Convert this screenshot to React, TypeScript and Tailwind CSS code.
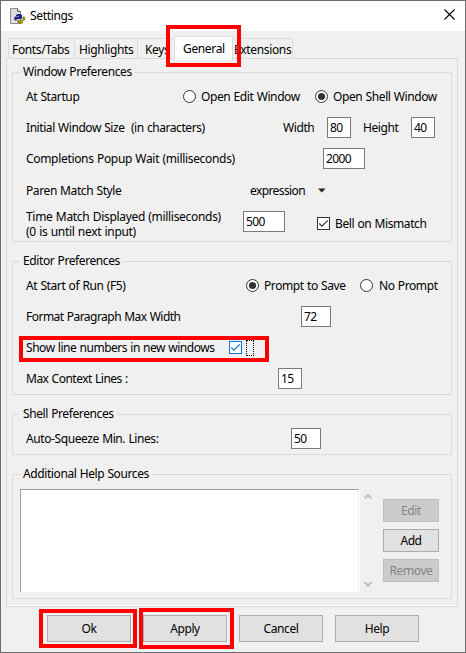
import React from "react";

function Label({ className = "", children }: { className?: string; children: React.ReactNode }) {
  return <span className={`block shrink-0 whitespace-pre leading-[15px] ${className}`}>{children}</span>;
}

function Group({ title, className = "", children }: { title: string; className?: string; children: React.ReactNode }) {
  return (
    <section className={`border border-[#dcdcdc] ${className}`}>
      <h2 className="-mt-[9px] ml-[7px] h-4 w-fit bg-[#f0f0f0] px-[3px] leading-4 whitespace-nowrap">{title}</h2>
      {children}
    </section>
  );
}

function Field({ value, className = "" }: { value: string; className?: string }) {
  return (
    <div className={`h-[21px] shrink-0 border border-[#7a7a7a] bg-white pl-[2px] leading-[19px] tracking-[-0.6px] ${className}`}>{value}</div>
  );
}

function Radio({ checked = false }: { checked?: boolean }) {
  return (
    <svg width="13" height="13" viewBox="0 0 13 13" className="shrink-0">
      <circle cx="6.5" cy="6.5" r="6" fill="#fff" stroke="#333" />
      {checked && <circle cx="6.5" cy="6.5" r="3.6" fill="#333" />}
    </svg>
  );
}

function Check({ color }: { color: string }) {
  return (
    <svg width="13" height="13" viewBox="0 0 13 13" className="shrink-0">
      <rect x="0.5" y="0.5" width="12" height="12" fill="#fff" stroke={color} />
      <path d="M2.3 6.5 5 9.2 10.8 3.4" fill="none" stroke={color} strokeWidth="1.2" />
    </svg>
  );
}

function SideButton({ label, disabled = false }: { label: string; disabled?: boolean }) {
  return (
    <button
      className={`h-[23px] w-14 border text-center leading-[21px] ${
        disabled ? "border-[#bfbfbf] bg-[#cccccc] text-[#838383]" : "border-[#adadad] bg-[#e1e1e1]"
      }`}
    >
      {label}
    </button>
  );
}

function MainButton({ label }: { label: string }) {
  return <button className="h-[27px] w-[84px] border border-[#adadad] bg-[#e1e1e1] leading-[24px]">{label}</button>;
}

function Arrow({ down = false }: { down?: boolean }) {
  return (
    <svg width="8" height="7" viewBox="0 0 8 7" className="block">
      <path d={down ? "M.7 1.2 4 4.7 7.3 1.2" : "M.7 5.5 4 2 7.3 5.5"} fill="none" stroke="#bfbfbf" strokeWidth="2" />
    </svg>
  );
}

function IdleIcon() {
  return (
    <svg width="17" height="17" viewBox="0 0 17 17" className="block">
      <path d="M1.500 .5h7l3 3v12h-10z" fill="#dedede" stroke="#8a8a8a" />
      <path d="M8.500 .5v3h3" fill="#fff" stroke="#555" />
      <path d="M7 7.500q0-1.500 2-1.500h2.500q1.500 0 1.500 1.500V10q0 1-1.500 1H8.500q-1 0-1 1.500H6.500q-1.300 0-1.300-2T6.500 8.500h3.500V8H7z" fill="#20248c" />
      <path d="M13.500 8.500H15q1.300 0 1.300 2T15 12.700h-4v.6h3v1q0 1.700-2.500 1.700T8.300 14.300V13q0-1.300 1.500-1.300h2.400q1.300 0 1.300-1.500z" fill="#8f8a1e" />
    </svg>
  );
}

export default function App() {
  return (
    <div className="relative h-[653px] w-[466px] overflow-hidden border border-[#6d6d6d] bg-[#f0f0f0] font-['Noto_Sans','Open_Sans',sans-serif] text-[12px] tracking-[-0.4px] text-black [word-spacing:0.5px]">
      <header className="flex h-[30px] items-center bg-white pl-2">
        <IdleIcon />
        <span className="ml-1 leading-4 tracking-[-0.34px]">Settings</span>
        <svg width="11" height="11" viewBox="0 0 11 11" className="mr-[10px] mb-[3px] ml-auto">
          <path d="M.5 .5l10 10M10.500 .5l-10 10" stroke="#000" strokeWidth="1.100" />
        </svg>
      </header>

      <nav className="flex h-[27px] items-end pl-[7px] tracking-[-0.35px]">
        <div className="h-5 w-[67px] border border-b-0 border-[#dcdcdc] pl-[3px] leading-[21px]">Fonts/Tabs</div>
        <div className="h-5 w-[63px] border-t border-r border-[#dcdcdc] pl-1 leading-[21px]">Highlights</div>
        <div className="h-5 w-[36px] border-t border-[#dcdcdc] pl-[7px] leading-[21px]">Keys</div>
        <div className="z-10 -mb-[2px] h-6 w-[59px] border border-b-0 border-[#dcdcdc] bg-white pl-[8px] leading-[23px]">General</div>
        <div className="h-5 w-[60px] border-t border-r border-[#dcdcdc] pl-[1px] leading-[21px]">Extensions</div>
      </nav>

      <main className="ml-[5px] h-[549px] w-[452px] border border-[#dcdcdc] px-[5px] pt-[13px] shadow-[inset_0_-1px_0_#fff]">
        <Group title="Window Preferences" className="h-[170px]">
          <div className="flex h-[33px] items-center pl-[13px]">
            <Label className="w-[157px]">At Startup</Label>
            <Radio />
            <Label className="ml-[5px] w-[114px]">Open Edit Window</Label>
            <Radio checked />
            <Label className="ml-[5px]">Open Shell Window</Label>
          </div>
          <div className="flex h-[29px] items-center pl-[13px]">
            <Label className="w-[257px] tracking-[-0.43px]">Initial Window Size  (in characters)</Label>
            <Label className="w-[44px]">Width</Label>
            <Field value="80" className="w-6" />
            <Label className="ml-3 w-12">Height</Label>
            <Field value="40" className="w-6" />
          </div>
          <div className="flex h-[33px] items-center pl-[13px]">
            <Label className="w-[297px] tracking-[-0.32px]">Completions Popup Wait (milliseconds)</Label>
            <Field value="2000" className="w-[42px]" />
          </div>
          <div className="flex h-[31px] items-center pl-[13px]">
            <Label className="w-[224px]">Paren Match Style</Label>
            <Label className="w-[68px] tracking-[-0.6px]">expression</Label>
            <svg width="8" height="5" viewBox="0 0 8 5"><path d="M0 .5h7.500L3.800 4.500z" fill="#222" /></svg>
          </div>
          <div className="flex h-[35px] items-center pl-[13px]">
            <Label className="w-[217px] tracking-[-0.31px]">{"Time Match Displayed (milliseconds)\n(0 is until next input)"}</Label>
            <Field value="500" className="-mt-1 mr-8 w-[42px]" />
            <Check color="#333" />
            <Label className="ml-[5px]">Bell on Mismatch</Label>
          </div>
        </Group>

        <Group title="Editor Preferences" className="mt-[19px] h-[134px]">
          <div className="flex h-[33px] items-center pl-[13px]">
            <Label className="w-[220px]">At Start of Run (F5)</Label>
            <Radio checked />
            <Label className="ml-[5px] w-[96px]">Prompt to Save</Label>
            <Radio />
            <Label className="ml-[6px]">No Prompt</Label>
          </div>
          <div className="flex h-[29px] items-center pl-[13px]">
            <Label className="w-[275px] tracking-[-0.52px]">Format Paragraph Max Width</Label>
            <Field value="72" className="w-[30px]" />
          </div>
          <div className="flex h-[33px] items-center pl-[13px]">
            <Label className="w-[203px] tracking-[-0.46px]">Show line numbers in new windows</Label>
            <Check color="#0078d7" />
            <div className="ml-1 h-4 w-2 border border-dotted border-black" />
          </div>
          <div className="flex h-[29px] items-center pl-[13px]">
            <Label className="w-[252px] tracking-[-0.5px]">Max Context Lines :</Label>
            <Field value="15" className="w-6" />
          </div>
        </Group>

        <Group title="Shell Preferences" className="mt-[19px] h-[41px]">
          <div className="flex h-[33px] items-center pl-[13px]">
            <Label className="w-[265px]">Auto-Squeeze Min. Lines:</Label>
            <Field value="50" className="w-[30px]" />
          </div>
        </Group>

        <Group title="Additional Help Sources" className="mt-[19px] h-[125px]">
          <div className="flex pt-[7px] pl-[7px]">
            <div className="h-[103px] w-[339px] border-t border-r border-l border-[#a0a0a0] border-r-[#f0f0f0] bg-white" />
            <div className="flex h-[103px] w-6 flex-col justify-between border-l border-white pt-1 pb-1 pl-[4px]">
              <Arrow />
              <Arrow down />
            </div>
            <div className="flex flex-col gap-[7px] pt-[10px]">
              <SideButton label="Edit" disabled />
              <SideButton label="Add" />
              <SideButton label="Remove" disabled />
            </div>
          </div>
        </Group>
      </main>

      <footer className="flex gap-3 pt-2 pl-[46px]">
        <MainButton label="Ok" />
        <MainButton label="Apply" />
        <MainButton label="Cancel" />
        <MainButton label="Help" />
      </footer>

      <div className="absolute top-[24px] left-[165px] z-20 h-[42px] w-[75px] border-4 border-[#ff0000]" />
      <div className="absolute top-[335px] left-[18px] z-20 h-[26px] w-[250px] border-4 border-[#ff0000]" />
      <div className="absolute top-[608px] left-[38px] z-20 h-[39px] w-[98px] border-4 border-[#ff0000]" />
      <div className="absolute top-[607px] left-[138px] z-20 h-[41px] w-[95px] border-4 border-[#ff0000]" />
    </div>
  );
}
